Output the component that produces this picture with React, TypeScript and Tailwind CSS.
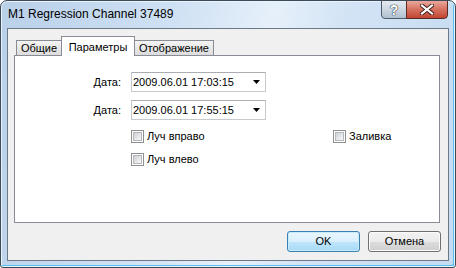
import React from "react";

const ui = { fontFamily: '"Liberation Sans", Arial, sans-serif' };

const Checkbox: React.FC<{ label: string }> = ({ label }) => (
  <div className="flex items-center h-[13px]">
    <div className="w-[13px] h-[13px] border border-[#8f8f8f] bg-white p-px">
      <div className="w-full h-full border border-[#b4b7bc] bg-gradient-to-br from-[#cdd0d5] to-[#f8f8f8]" />
    </div>
    <span className="ml-[3px] text-[11px] leading-[13px] text-black">{label}</span>
  </div>
);

const DateRow: React.FC<{ value: string; className?: string }> = ({ value, className }) => (
  <div className={`flex items-center ${className ?? ""}`}>
    <span className="w-[106px] text-right text-[11px] text-black">Дата:</span>
    <div className="ml-[10px] w-[135px] h-[20px] flex items-center border border-[#c6c9ce] border-t-[#abadb3] bg-white">
      <span className="pl-[1px] text-[11px] leading-[18px] text-black">{value}</span>
      <svg className="ml-auto mr-[5px]" width="7" height="4" viewBox="0 0 7 4">
        <polygon points="0,0 7,0 3.5,4" fill="#000" />
      </svg>
    </div>
  </div>
);

const Tab: React.FC<{ label: string; active?: boolean; width: string }> = ({ label, active, width }) =>
  active ? (
    <div
      className={`${width} relative z-10 -ml-px h-[20px] border border-b-0 border-[#898c95] bg-white flex justify-center pt-[2px] text-[11px] text-black`}
    >
      {label}
    </div>
  ) : (
    <div
      className={`${width} -ml-px first:ml-0 mb-px h-[15px] border border-b-0 border-[#898c95] bg-gradient-to-b from-[#f4f4f4] to-[#dcdcdc] flex justify-center leading-[15px] text-[11px] text-black`}
    >
      {label}
    </div>
  );

export default function App() {
  return (
    <div
      style={ui}
      className="w-[456px] h-[268px] flex flex-col rounded-t-[7px] rounded-b-[3px] border border-[#3d4a58] bg-[linear-gradient(100deg,#b9d0e9_0%,#cfe1f4_35%,#e6f0fa_55%,#d2e3f5_70%,#c5dbf1_100%)] shadow-[inset_0_0_0_1px_#e9f3fc,inset_-2px_-2px_0_#57c0f1] overflow-hidden"
    >
      {/* title bar */}
      <div className="h-[27px] flex items-start shrink-0">
        <span className="ml-[7px] mt-[6px] text-[12px] leading-[15px] text-black">
          M1 Regression Channel 37489
        </span>
        <div className="ml-auto mr-[7px] -mt-px flex">
          <div className="w-[26px] h-[19px] rounded-bl-[4px] border border-[#4f5b68] bg-gradient-to-b from-[#e4eaf1] via-[#cdd7e2] to-[#b0bfcf] flex items-center justify-center">
            <span className="text-[14px] font-bold leading-none text-white [text-shadow:0_0_1px_#2d3a48,0_0_1px_#2d3a48,0_0_1px_#2d3a48]">
              ?
            </span>
          </div>
          <div className="-ml-px w-[42px] h-[19px] rounded-br-[4px] border border-[#5b2a24] bg-gradient-to-b from-[#e8a89c] via-[#d6705f] to-[#c04431] flex items-center justify-center">
            <svg width="14" height="11" viewBox="0 0 14 11">
              <path d="M2 1.5 L12 9.5 M12 1.5 L2 9.5" stroke="#3b1b16" strokeWidth="4" strokeLinecap="square" />
              <path d="M2 1.5 L12 9.5 M12 1.5 L2 9.5" stroke="#ffffff" strokeWidth="2.2" strokeLinecap="square" />
            </svg>
          </div>
        </div>
      </div>

      {/* client area */}
      <div className="mx-[6px] h-[233px] border border-[#6d7987] bg-[#f0f0f0] flex flex-col">
        <div className="ml-[6px] mr-[8px] mt-[7px] flex flex-col">
          <div className="flex items-end h-[20px] -mb-px pl-[2px]">
            <Tab label="Общие" width="w-[46px]" />
            <Tab label="Параметры" width="w-[74px]" active />
            <Tab label="Отображение" width="w-[80px]" />
          </div>
          <div className="h-[168px] border border-[#898c95] bg-white flex flex-col">
            <DateRow value="2009.06.01 17:03:15" className="mt-[16px]" />
            <DateRow value="2009.06.01 17:55:15" className="mt-[8px]" />
            <div className="mt-[10px] ml-[116px] flex">
              <div className="w-[202px]">
                <Checkbox label="Луч вправо" />
              </div>
              <Checkbox label="Заливка" />
            </div>
            <div className="mt-[10px] ml-[116px] flex">
              <Checkbox label="Луч влево" />
            </div>
          </div>
        </div>

        <div className="mt-[8px] mr-[7px] flex justify-end gap-[8px]">
          <button className="w-[73px] h-[21px] rounded-[3px] border border-[#3c7fb1] bg-[linear-gradient(#eaf6fd_0%,#d9f0fc_50%,#bee6fd_51%,#a7d9f5_100%)] shadow-[inset_0_0_0_1px_#c8ecfc] text-[11px] text-black">
            OK
          </button>
          <button className="w-[73px] h-[21px] rounded-[3px] border border-[#707070] bg-[linear-gradient(#f2f2f2_0%,#ebebeb_50%,#dddddd_51%,#cfcfcf_100%)] shadow-[inset_0_0_0_1px_#fbfbfb] text-[11px] text-black">
            Отмена
          </button>
        </div>
      </div>
    </div>
  );
}
